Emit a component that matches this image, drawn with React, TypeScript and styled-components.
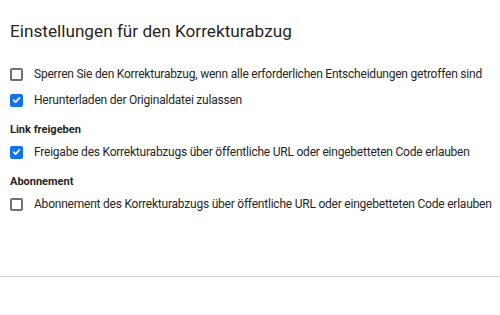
import * as React from "react";
import styled, { createGlobalStyle } from "styled-components";

const GlobalStyle = createGlobalStyle`
  html, body {
    margin: 0;
    padding: 0;
    background: #ffffff;
  }
  body {
    font-family: Roboto, "Noto Sans", sans-serif;
    color: #2c2c2c;
  }
`;

type Option = {
  id: string;
  label: string;
  checked: boolean;
};

type Section = {
  heading?: string;
  options: Option[];
};

const sections: Section[] = [
  {
    options: [
      {
        id: "lock",
        label:
          "Sperren Sie den Korrekturabzug, wenn alle erforderlichen Entscheidungen getroffen sind",
        checked: false,
      },
      { id: "download", label: "Herunterladen der Originaldatei zulassen", checked: true },
    ],
  },
  {
    heading: "Link freigeben",
    options: [
      {
        id: "share",
        label: "Freigabe des Korrekturabzugs über öffentliche URL oder eingebetteten Code erlauben",
        checked: true,
      },
    ],
  },
  {
    heading: "Abonnement",
    options: [
      {
        id: "subscribe",
        label: "Abonnement des Korrekturabzugs über öffentliche URL oder eingebetteten Code erlauben",
        checked: false,
      },
    ],
  },
];

const CheckBox: React.FC<{ checked: boolean; onClick: () => void }> = ({ checked, onClick }) => (
  <Box $checked={checked} onClick={onClick} role="checkbox" aria-checked={checked}>
    {checked ? (
      <svg width="10" height="10" viewBox="0 0 10 10">
        <path d="M1.8 5.2 L4 7.4 L8.3 2.6" fill="none" stroke="#fff" strokeWidth="1.8" strokeLinecap="round" strokeLinejoin="round" />
      </svg>
    ) : null}
  </Box>
);

export default function App() {
  const [values, setValues] = React.useState<Record<string, boolean>>(() => {
    const init: Record<string, boolean> = {};
    sections.forEach((s) => s.options.forEach((o) => (init[o.id] = o.checked)));
    return init;
  });

  const toggle = React.useCallback((id: string) => {
    setValues((v) => ({ ...v, [id]: !v[id] }));
  }, []);

  return (
    <Page>
      <GlobalStyle />
      <Title>Einstellungen für den Korrekturabzug</Title>
      <Sections>
        {sections.map((section, i) => (
          <Group key={i}>
            {section.heading ? <Heading>{section.heading}</Heading> : null}
            {section.options.map((o) => (
              <Row key={o.id}>
                <CheckBox checked={values[o.id]} onClick={() => toggle(o.id)} />
                <Label onClick={() => toggle(o.id)}>{o.label}</Label>
              </Row>
            ))}
          </Group>
        ))}
      </Sections>
      <Footer />
    </Page>
  );
}

const Page = styled.div`
  width: 500px;
  height: 315px;
  display: flex;
  flex-direction: column;
  overflow: hidden;
`;

const Title = styled.h1`
  margin: 0;
  padding: 20px 10px 0;
  font-size: 17.2px;
  line-height: 22px;
  font-weight: 400;
  color: #262626;
`;

const Sections = styled.div`
  display: flex;
  flex-direction: column;
  gap: 14px;
  padding: 23px 10px 0;
`;

const Group = styled.div`
  display: flex;
  flex-direction: column;
  gap: 8px;
`;

const Heading = styled.div`
  font-size: 11px;
  font-weight: 700;
  line-height: 14px;
  color: #262626;
  margin-bottom: -2px;
`;

const Row = styled.div`
  display: flex;
  align-items: center;
  gap: 11px;
  height: 18px;
`;

const Box = styled.span<{ $checked: boolean }>`
  box-sizing: border-box;
  flex: none;
  width: 13px;
  height: 13px;
  border-radius: 2px;
  border: 2px solid ${(p) => (p.$checked ? "#1473e6" : "#707070")};
  background: ${(p) => (p.$checked ? "#1473e6" : "#ffffff")};
  display: flex;
  align-items: center;
  justify-content: center;
  cursor: pointer;
`;

const Label = styled.span`
  font-size: 12px;
  letter-spacing: -0.22px;
  line-height: 18px;
  color: #262626;
  white-space: nowrap;
  cursor: pointer;
`;

const Footer = styled.div`
  margin-top: auto;
  margin-bottom: 37px;
  height: 1px;
  border-top: 1px solid #d3d3d3;
`;
